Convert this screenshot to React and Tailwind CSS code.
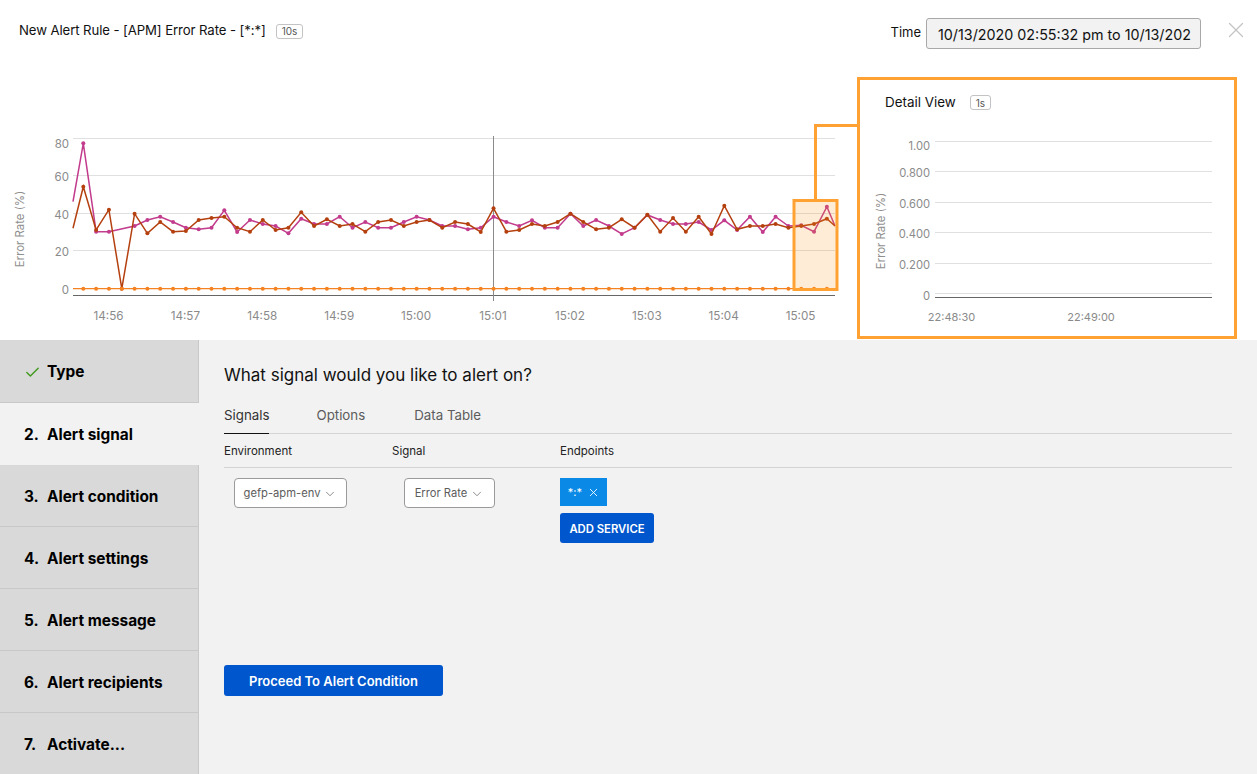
import { Check, ChevronDown, X } from 'lucide-react';

// y values read off the chart, in zoomed crop units (3x, origin y=120)
const PINK = [335, 335, null, 318, 300, 290, 306, 323, 328, 323, 271, 336, 300, 312, 318, 340, 296, 312, 312, 290, 323, 306, 323, 323, 306, 290, 300, 318, 318, 328, 323, 290, 306, 318, 301, 323, 323, 281, 318, 300, 318, 342, 323, 285, 300, 312, 312, 306, 330, 301, 330, 290, 336, 290, 318, 316, 335, 260];
const BROWN = [330, 269, 506, 281, 340, 306, 335, 333, 300, 294, 290, 323, 335, 300, 330, 323, 277, 318, 298, 318, 312, 335, 306, 300, 318, 306, 300, 323, 306, 312, 336, 265, 335, 330, 312, 318, 306, 281, 306, 328, 323, 298, 323, 284, 335, 294, 335, 290, 342, 257, 328, 318, 318, 312, 323, 318, 312, 296];
const PINK_PEAK = 70;
const BROWN_PEAK = 200;

const X0 = 83.3;
const STEP = 12.82;
const px = (i) => X0 + STEP * i;
const py = (v) => 120 + v / 3;

function seriesPoints(values, peak, startY, endY) {
  const pts = [[73, py(startY)], [X0, py(peak)]];
  values.forEach((v, i) => {
    if (v !== null) pts.push([px(i + 1), py(v)]);
  });
  pts.push([835, py(endY)]);
  return pts;
}

const pinkPts = seriesPoints(PINK, PINK_PEAK, 245, 318);
const brownPts = seriesPoints(BROWN, BROWN_PEAK, 325, 318);
const orangeDots = Array.from({ length: 59 }, (_, i) => px(i));

const toLine = (pts) => pts.map((p) => `${p[0].toFixed(1)},${p[1].toFixed(1)}`).join(' ');

const MINUTES = ['14:56', '14:57', '14:58', '14:59', '15:00', '15:01', '15:02', '15:03', '15:04', '15:05'];
const STEPS = ['3.', '4.', '5.', '6.', '7.'];
const STEP_LABELS = ['Alert condition', 'Alert settings', 'Alert message', 'Alert recipients', 'Activate...'];

function MainChart() {
  return (
    <svg width="858" height="263" viewBox="0 77 858 263" className="block shrink-0">
      {[138.5, 175.5, 213.5, 250.5].map((y) => (
        <line key={y} x1="73" x2="835" y1={y} y2={y} stroke="#e0e0e0" />
      ))}
      {[['80', 147.5], ['60', 180.5], ['40', 218.5], ['20', 255.5], ['0', 293.5]].map(([t, y]) => (
        <text key={t} x="69" y={y} textAnchor="end" fontSize="11.5" fill="#8a8a8a">{t}</text>
      ))}
      <text transform="translate(24 229) rotate(-90)" textAnchor="middle" fontSize="11.4" fill="#8f8f8f">Error Rate (%)</text>
      <line x1="73" x2="835" y1="295.5" y2="295.5" stroke="#666666" />
      <line x1="493.5" x2="493.5" y1="136" y2="301" stroke="#8a8a8a" />
      {MINUTES.map((m, i) => (
        <text key={m} x={108.5 + i * 76.9} y="320" textAnchor="middle" fontSize="11.7" fill="#8a8a8a">{m}</text>
      ))}
      <polyline points={toLine(pinkPts)} fill="none" stroke="#c23b8c" strokeWidth="1.5" />
      {pinkPts.slice(1, -1).map((p) => (
        <circle key={p[0]} cx={p[0]} cy={p[1]} r="2" fill="#c23b8c" />
      ))}
      <polyline points={toLine(brownPts)} fill="none" stroke="#b5400f" strokeWidth="1.5" />
      {brownPts.slice(1, -1).map((p) => (
        <circle key={p[0]} cx={p[0]} cy={p[1]} r="2" fill="#b5400f" />
      ))}
      <line x1="73" x2="835" y1="288.7" y2="288.7" stroke="#f58220" strokeWidth="1.3" />
      {orangeDots.map((x) => (
        <circle key={x} cx={x} cy="288.7" r="2" fill="#f58220" />
      ))}
      {/* brush and the connector to the detail panel */}
      <rect x="794" y="200.5" width="43" height="89" fill="#f7941d" fillOpacity="0.18" stroke="#ffa233" strokeWidth="3" />
      <path d="M815.5 199V125.5H858" fill="none" stroke="#ffa233" strokeWidth="3" />
    </svg>
  );
}

function DetailChart() {
  const lines = [[141.5, '1.00', 149.5], [171.5, '0.800', 176.5], [202.5, '0.600', 207.5], [232.5, '0.400', 237.5], [263.5, '0.200', 268.5], [293.5, '0', 299.5]];
  return (
    <svg width="374" height="214" viewBox="860 125 374 214" className="block">
      {lines.map(([y, t, ty]) => (
        <g key={t}>
          <line x1="935" x2="1212" y1={y} y2={y} stroke="#e0e0e0" />
          <text x="930" y={ty} textAnchor="end" fontSize="11.2" fill="#8a8a8a">{t}</text>
        </g>
      ))}
      <line x1="935" x2="1212" y1="297.5" y2="297.5" stroke="#666666" />
      <text transform="translate(885 231) rotate(-90)" textAnchor="middle" fontSize="11.4" fill="#8f8f8f">Error Rate (%)</text>
      <text x="951.5" y="321" textAnchor="middle" fontSize="11" fill="#8a8a8a">22:48:30</text>
      <text x="1091" y="321" textAnchor="middle" fontSize="11" fill="#8a8a8a">22:49:00</text>
    </svg>
  );
}

function Badge({ children }) {
  return (
    <span className="inline-flex h-[15px] items-center rounded-[3px] border border-[#c3c3c3] px-[5px] text-[10px] leading-none text-[#555]">
      {children}
    </span>
  );
}

function SelectBox({ width, label }) {
  return (
    <div className={`flex h-[30px] ${width} items-center justify-center gap-[3px] rounded-[4px] border border-[#9a9a9a] bg-white pt-[1px] text-[11.2px] text-[#5c5c5c]`}>
      {label}
      <ChevronDown size={14} strokeWidth={1.2} />
    </div>
  );
}

export default function App() {
  return (
    <div className="flex h-[774px] w-[1257px] flex-col overflow-hidden bg-white font-['Inter','Liberation_Sans',sans-serif] text-black">
      {/* Header */}
      <div className="flex h-[77px] shrink-0 items-start pl-[19px] pr-[8px] pt-[18px]">
        <div className="flex h-[26px] items-center gap-[10px]">
          <span className="text-[13.2px] tracking-[-0.1px] text-[#111]">New Alert Rule - [APM] Error Rate - [*:*]</span>
          <Badge>10s</Badge>
        </div>
        <div className="ml-auto flex items-start">
          <span className="mr-[5px] mt-[5px] text-[13px] text-[#111]">Time</span>
          <div className="h-[31px] w-[275px] whitespace-nowrap rounded-[3px] border border-[#a8a8a8] bg-[#f2f2f2] pl-[11px] text-[14.3px] leading-[31px] text-[#111]">
            10/13/2020 02:55:32 pm to 10/13/202
          </div>
          <X size={26} strokeWidth={1.2} className="ml-[22px] mt-[-1px] text-[#c4c4c4]" />
        </div>
      </div>

      {/* Charts */}
      <div className="flex h-[263px] shrink-0">
        <MainChart />
        <div className="h-[262px] w-[380px] shrink-0 -translate-x-px border-[3px] border-[#ffa233] bg-white">
          <div className="flex h-[45px] items-center gap-[14px] pl-[25px]">
            <span className="text-[13.4px] text-[#111]">Detail View</span>
            <Badge>1s</Badge>
          </div>
          <DetailChart />
        </div>
      </div>

      {/* Wizard */}
      <div className="flex min-h-0 flex-1 bg-[#f2f2f2]">
        <div className="flex w-[199px] shrink-0 flex-col">
          <div className="flex h-[63px] shrink-0 items-center border-b border-r border-[#c8c8c8] bg-[#d9d9d9] pl-[24px] pt-[2px] text-[15.4px] font-bold">
            <Check size={17} strokeWidth={2} className="mr-[6px] shrink-0 text-[#3f9a1c]" />
            Type
          </div>
          <div className="flex h-[62px] shrink-0 items-center pl-[24px] pt-[2px] text-[15.4px] font-bold">
            <span className="w-[23px]">2.</span>
            Alert signal
          </div>
          {STEP_LABELS.map((label, i) => (
            <div key={label} className="flex h-[62px] shrink-0 items-center border-b border-r border-[#c8c8c8] bg-[#d9d9d9] pl-[24px] pt-[2px] text-[15.4px] font-bold">
              <span className="w-[23px]">{STEPS[i]}</span>
              {label}
            </div>
          ))}
        </div>

        <div className="flex-1 pl-[25px] pr-[25px]">
          <h2 className="mt-[24px] text-[17px] font-normal leading-[22px] text-[#111]">What signal would you like to alert on?</h2>
          <div className="mt-[20px] flex h-[28px] gap-[47px] border-b border-[#d4d4d4] text-[13.3px] leading-[18px]">
            <span className="-mb-px h-[28px] border-b border-[#111] text-[#333]">Signals</span>
            <span className="text-[#5c5c5c]">Options</span>
            <span className="ml-[2px] text-[#5c5c5c]">Data Table</span>
          </div>
          <div className="grid h-[34px] grid-cols-[168px_168px_1fr] items-center border-b border-[#d4d4d4] pt-[2px] text-[11.5px] text-[#222]">
            <span>Environment</span>
            <span>Signal</span>
            <span>Endpoints</span>
          </div>
          <div className="mt-[10px] grid grid-cols-[168px_168px_1fr]">
            <div className="pl-[10px]">
              <SelectBox width="w-[113px]" label="gefp-apm-env" />
            </div>
            <div className="pl-[12px]">
              <SelectBox width="w-[91px]" label="Error Rate" />
            </div>
            <div className="flex flex-col items-start gap-[7px]">
              <div className="flex h-[28px] w-[47px] items-center justify-end gap-[5px] bg-[#0a8ae6] pr-[7px] text-[11px] text-white">
                *:*
                <X size={13} strokeWidth={1.6} />
              </div>
              <button className="h-[30px] w-[94px] rounded-[3px] bg-[#0056cc] pt-[2px] text-[11.3px] font-semibold text-white">ADD SERVICE</button>
            </div>
          </div>
          <button className="mt-[122px] h-[31px] w-[219px] rounded-[3px] bg-[#0056cc] pt-[2px] text-[13px] font-semibold text-white">Proceed To Alert Condition</button>
        </div>
      </div>
    </div>
  );
}
